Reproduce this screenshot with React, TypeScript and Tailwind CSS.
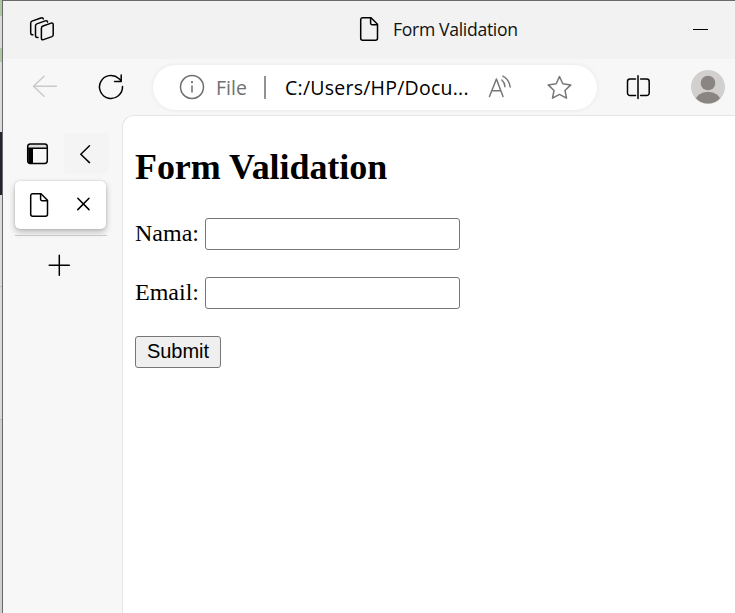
import type { ReactNode } from "react";

type IconProps = { box: string; className: string; children: ReactNode };

function Icon({ box, className, children }: IconProps) {
  return (
    <svg
      viewBox={box}
      className={`shrink-0 fill-none ${className}`}
      strokeWidth={1.5}
      stroke="currentColor"
      strokeLinecap="round"
      strokeLinejoin="round"
      aria-hidden="true"
    >
      {children}
    </svg>
  );
}

function PageIcon({ className = "" }: { className?: string }) {
  return (
    <Icon box="0 0 20 26" className={`h-[26px] w-5 ${className}`}>
      <path d="M3.7 1.7H12L18.5 8.2V22.3A2 2 0 0 1 16.5 24.3H3.7A2 2 0 0 1 1.7 22.3V3.7A2 2 0 0 1 3.7 1.7Z" />
      <path d="M11.6 2V7.2A1.5 1.5 0 0 0 13.1 8.7H18.3" />
    </Icon>
  );
}

function DesktopEdge() {
  return (
    <div className="flex w-[3px] shrink-0 flex-col border-r border-[#6b696b] bg-[#dadada]">
      <div className="h-4 bg-[#adc9a4]" />
      <div className="h-8" />
      <div className="h-3.5 bg-[#adc9a4]" />
      <div className="h-[70px]" />
      <div className="h-[63px] bg-[#25232f]" />
      <div className="h-[92px] border-b border-[#bdbdbd]" />
      <div className="h-[133px] border-b border-[#bdbdbd]" />
      <div className="flex-1 bg-[#cfcfcf]" />
    </div>
  );
}

function TitleBar() {
  return (
    <header className="flex h-[58px] shrink-0 items-center bg-[#f2f2f2] pb-0.5 text-black">
      <Icon box="0 0 28 28" className="mt-0.5 ml-[25px] h-7 w-7">
        <path d="M15 10L23.2 7.1Q25.2 6.6 25.2 8.7V18.7Q25.2 20.1 23.9 20.6L15.5 23.6Q13.4 24.3 13.4 22.2V12.2Q13.4 10.6 15 10Z" />
        <path d="M10 21.4Q7.5 21.8 7.5 19.8V9.8Q7.5 8.4 8.8 7.9L17.2 4.9Q19.2 4.3 19.6 6" />
        <path d="M4.9 18.8Q2.7 18.8 2.7 17V7Q2.7 5.6 4 5.1L12.9 2Q14.9 1.4 15.4 2.9" />
      </Icon>
      <PageIcon className="ml-[303px]" />
      <h1 className="ml-3.5 w-[290px] font-['Open_Sans','Noto_Sans',sans-serif] text-[17.6px] leading-6 tracking-[-0.32px] text-[#111]">
        Form Validation
      </h1>
      <div className="ml-2.5 h-px w-[15px] shrink-0 bg-black" />
    </header>
  );
}

function AddressBar() {
  return (
    <div className="ml-7 flex h-[45px] w-[444px] shrink-0 items-center rounded-full bg-white font-['Open_Sans','Noto_Sans',sans-serif] shadow-[0_0_5px_rgba(0,0,0,0.07)]">
      <Icon box="0 0 26 26" className="ml-[26px] h-[26px] w-[26px] text-[#6e6e6e]">
        <circle cx="13" cy="13" r="11.5" />
        <path d="M13 11.5V18.5" strokeLinecap="butt" />
        <circle cx="13" cy="8.2" r="1.1" fill="currentColor" stroke="none" />
      </Icon>
      <span className="ml-[11px] w-[33px] pt-0.5 text-[19.5px] text-[#707070]">File</span>
      <span className="ml-[15px] h-[23px] w-0.5 bg-[#929292]" />
      <span className="ml-[19px] w-[200px] pt-0.5 text-[19.5px] tracking-[0.24px] whitespace-nowrap text-black">
        C:/Users/HP/Docu...
      </span>
      <Icon box="0 0 26 26" className="ml-0.5 h-[26px] w-[26px] text-[#767676]">
        <path d="M2.5 22.5L9.4 5L16 22.5M4.8 16.7H13.8" />
        <path d="M14.9 6Q17.7 8.5 18 12.8M15.9 2.2Q22.1 5.5 23.2 13" />
      </Icon>
      <Icon box="0 0 28 28" className="mt-px ml-[33px] h-7 w-7 text-[#767676]">
        <path d="M13.5 2.5L16.8 9.8L24.8 10.9L19 16.5L20.5 24.2L13.5 20.4L6.5 24.2L8 16.5L2.2 10.9L10.2 9.8Z" />
      </Icon>
    </div>
  );
}

function Toolbar() {
  return (
    <div className="flex h-14 shrink-0 items-center bg-[#f7f7f7] text-black">
      <Icon box="0 0 26 26" className="ml-[29px] h-[26px] w-[26px] text-[#cacaca]">
        <path d="M24.3 12.3H1.5M12 2.3L1.5 12.3L12 22.3" />
      </Icon>
      <Icon box="0 0 28 28" className="ml-[39px] h-7 w-7">
        <path d="M25.5 13.5A11.5 11.5 0 1 1 21.8 5.5L24.2 7.8M24.2 2V8.5H17.6" />
      </Icon>
      <AddressBar />
      <Icon box="0 0 26 26" className="ml-7 h-[26px] w-[26px]">
        <path d="M10.5 5.1H5A2.5 2.5 0 0 0 2.5 7.6V18.9A2.5 2.5 0 0 0 5 21.4H10.5M15.6 5.1H21.7A2.5 2.5 0 0 1 24.2 7.6V18.9A2.5 2.5 0 0 1 21.7 21.4H15.6M13 1.7V24.5" />
      </Icon>
      <svg viewBox="0 0 34 34" className="ml-10 h-[34px] w-[34px]" aria-label="Profile">
        <clipPath id="avatar">
          <circle cx="17" cy="17" r="16.5" />
        </clipPath>
        <circle cx="17" cy="17" r="17" fill="#d2d0ce" />
        <g fill="#8a8583" clipPath="url(#avatar)">
          <circle cx="17" cy="13" r="7.3" />
          <ellipse cx="17" cy="31" rx="12.5" ry="9.3" />
        </g>
      </svg>
    </div>
  );
}

function Sidebar() {
  return (
    <aside className="w-[119px] shrink-0 text-black">
      <div className="mt-[18px] flex h-[41px] items-center">
        <Icon box="0 0 24 24" className="ml-[23px] h-6 w-6">
          <path d="M2.5 6.2Q2.5 2.5 5.5 2.5H18.5Q21.5 2.5 21.5 5.5V6.2Z" fill="#dedede" stroke="none" />
          <path d="M2.2 6.5H7V21.5H4.5Q2.2 21.5 2.2 19Z" fill="currentColor" stroke="none" />
          <rect x="1.7" y="1.9" width="19.6" height="19.6" rx="2.7" />
          <path d="M2 6.2H21" />
        </Icon>
        <div className="ml-3.5 flex h-[41px] w-[45px] items-center justify-center rounded bg-[#f4f4f4]">
          <Icon box="0 0 20 20" className="h-5 w-5">
            <path d="M12.5 1.8L3.8 10.2L12.5 18.6" />
          </Icon>
        </div>
      </div>
      <div className="mt-[7px] ml-3 flex h-12 w-[91px] items-center rounded-[5px] bg-white shadow-[0_3px_6px_rgba(0,0,0,0.25),0_0_2px_rgba(0,0,0,0.18)]">
        <PageIcon className="ml-3.5" />
        <Icon box="0 0 16 16" className="ml-[27px] h-4 w-4">
          <path d="M1.8 1.2L13 12.6M13 1.2L1.8 12.6" />
        </Icon>
      </div>
      <div className="mt-1.5 ml-3 h-px w-[92px] bg-[#c8c8c8]" />
      <Icon box="0 0 24 24" className="mt-[17px] ml-11 h-6 w-6">
        <path d="M12.3 2.2V22.2M2.2 12.3H22.3" />
      </Icon>
    </aside>
  );
}

function Field({ label, id }: { label: string; id: string }) {
  return (
    <div className="mb-[27px] flex h-8 items-center">
      <label htmlFor={id} className="w-[70px] shrink-0 pb-0.5 text-2xl leading-8">
        {label}
      </label>
      <input
        id={id}
        className="h-8 w-[255px] rounded-[3px] border border-[#767676] bg-white px-1 font-['Liberation_Sans',sans-serif] text-xl outline-none"
      />
    </div>
  );
}

function Page() {
  return (
    <main className="min-w-0 flex-1 rounded-tl-[12px] border-t border-l border-[#e5e5e5] bg-white pl-3 font-['Liberation_Serif',serif] text-black">
      <h2 className="mt-[31px] mb-[30px] text-4xl leading-[41px] font-bold tracking-[-0.06px]">
        Form Validation
      </h2>
      <form onSubmit={(event) => event.preventDefault()}>
        <Field label="Nama:" id="nama" />
        <Field label="Email:" id="email" />
        <button
          type="submit"
          className="flex h-8 w-[86px] items-center justify-center rounded-[3px] border border-[#767676] bg-[#efefef] pb-0.5 font-['Liberation_Sans',sans-serif] text-xl leading-7"
        >
          Submit
        </button>
      </form>
    </main>
  );
}

export default function App() {
  return (
    <div className="flex h-[613px] w-[735px] overflow-hidden">
      <DesktopEdge />
      <div className="flex min-w-0 flex-1 flex-col border-t border-[#6b696b] bg-[#f7f7f7]">
        <TitleBar />
        <Toolbar />
        <div className="flex min-h-0 flex-1">
          <Sidebar />
          <Page />
        </div>
      </div>
    </div>
  );
}
